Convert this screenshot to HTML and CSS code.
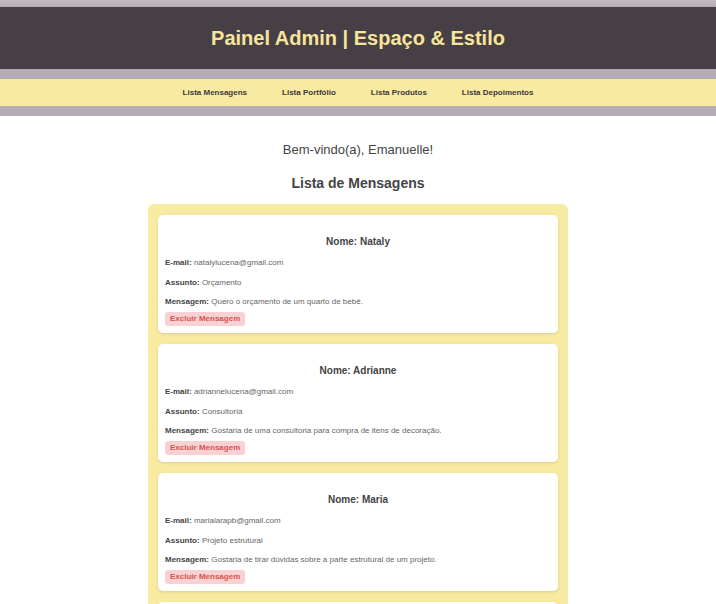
FILE: index.html
```html
<!DOCTYPE html>
<html lang="pt-BR">
<head>
<meta charset="utf-8">
<title>Painel Admin | Espaço &amp; Estilo</title>
<link rel="stylesheet" href="styles.css">
</head>
<body>
<header class="site-header">
  <div class="brand"><h1>Painel Admin | Espaço &amp; Estilo</h1></div>
  <nav class="nav">
    <a href="#">Lista Mensagens</a>
    <a href="#">Lista Portfólio</a>
    <a href="#">Lista Produtos</a>
    <a href="#">Lista Depoimentos</a>
  </nav>
</header>
<main class="main">
  <p class="welcome">Bem-vindo(a), Emanuelle!</p>
  <h2 class="title">Lista de Mensagens</h2>
  <section class="list">
    <article class="card">
      <h3>Nome: Nataly</h3>
      <p class="f-email"><b>E-mail:</b> natalylucena@gmail.com</p>
      <p class="f-subject"><b>Assunto:</b> Orçamento</p>
      <p class="f-message"><b>Mensagem:</b> Quero o orçamento de um quarto de bebê.</p>
      <button class="btn">Excluir Mensagem</button>
    </article>
    <article class="card">
      <h3>Nome: Adrianne</h3>
      <p class="f-email"><b>E-mail:</b> adriannelucena@gmail.com</p>
      <p class="f-subject"><b>Assunto:</b> Consultoria</p>
      <p class="f-message"><b>Mensagem:</b> Gostaria de uma consultoria para compra de itens de decoração.</p>
      <button class="btn">Excluir Mensagem</button>
    </article>
    <article class="card">
      <h3>Nome: Maria</h3>
      <p class="f-email"><b>E-mail:</b> marialarapb@gmail.com</p>
      <p class="f-subject"><b>Assunto:</b> Projeto estrutural</p>
      <p class="f-message"><b>Mensagem:</b> Gostaria de tirar dúvidas sobre a parte estrutural de um projeto.</p>
      <button class="btn">Excluir Mensagem</button>
    </article>
    <article class="card">
      <h3>Nome: Julia</h3>
      <p class="f-email"><b>E-mail:</b> julia@gmail.com</p>
      <p class="f-subject"><b>Assunto:</b> Orçamento</p>
      <p class="f-message"><b>Mensagem:</b> Gostaria de um orçamento.</p>
      <button class="btn">Excluir Mensagem</button>
    </article>
  </section>
</main>
</body>
</html>
```
FILE: styles.css
```css
* { box-sizing: border-box; }
body {
  margin: 0;
  background: #fff;
  font-family: "Liberation Sans", Arial, sans-serif;
  color: #444;
}
.site-header {
  background: linear-gradient(#c3bcc3, #b5adb5 7px, #b5adb5);
  padding: 7px 0 10px;
}
.brand {
  background: #463f45;
  height: 62px;
  display: flex;
  align-items: center;
  justify-content: center;
}
.brand h1 {
  margin: 0;
  font-size: 20px;
  line-height: 24px;
  font-weight: bold;
  color: #f8e59c;
}
.nav {
  margin-top: 10px;
  background: #f9eaa1;
  height: 27px;
  display: flex;
  align-items: center;
  justify-content: center;
  gap: 35px;
}
.nav a {
  font-size: 8px;
  font-weight: bold;
  color: #3d383c;
  text-decoration: none;
}
.main {
  display: flex;
  flex-direction: column;
  align-items: center;
  padding-bottom: 20px;
}
.welcome {
  margin: 26px 0 0;
  font-size: 13px;
  line-height: 16px;
  color: #444;
}
.title {
  margin: 17px 0 12px;
  font-size: 14px;
  line-height: 17px;
  font-weight: bold;
  color: #444;
}
.list {
  width: 420px;
  background: #f9eaa1;
  border-radius: 6px;
  padding: 11px 10px 10px;
  display: flex;
  flex-direction: column;
  gap: 11px;
}
.card {
  background: #fff;
  border-radius: 5px;
  box-shadow: 0 1px 3px rgba(0,0,0,0.12);
  padding: 7px 7px 7px;
  display: flex;
  flex-direction: column;
  align-items: flex-start;
}
.card h3 {
  align-self: stretch;
  text-align: center;
  margin: 14px 0 10px;
  font-size: 10px;
  line-height: 12px;
  font-weight: bold;
  color: #444;
}
.card p {
  margin: 0;
  font-size: 8px;
  line-height: 10px;
  color: #666;
}
.card .f-email { margin-bottom: 10px; }
.card .f-subject { margin-bottom: 9px; }
.card .f-message { margin-bottom: 5px; }
.card p b { color: #444; }
.btn {
  font-family: inherit;
  font-size: 8px;
  line-height: 10px;
  font-weight: bold;
  color: #d9534f;
  background: #f8d2d2;
  border: none;
  border-radius: 3px;
  padding: 2px 5px;
}
```
